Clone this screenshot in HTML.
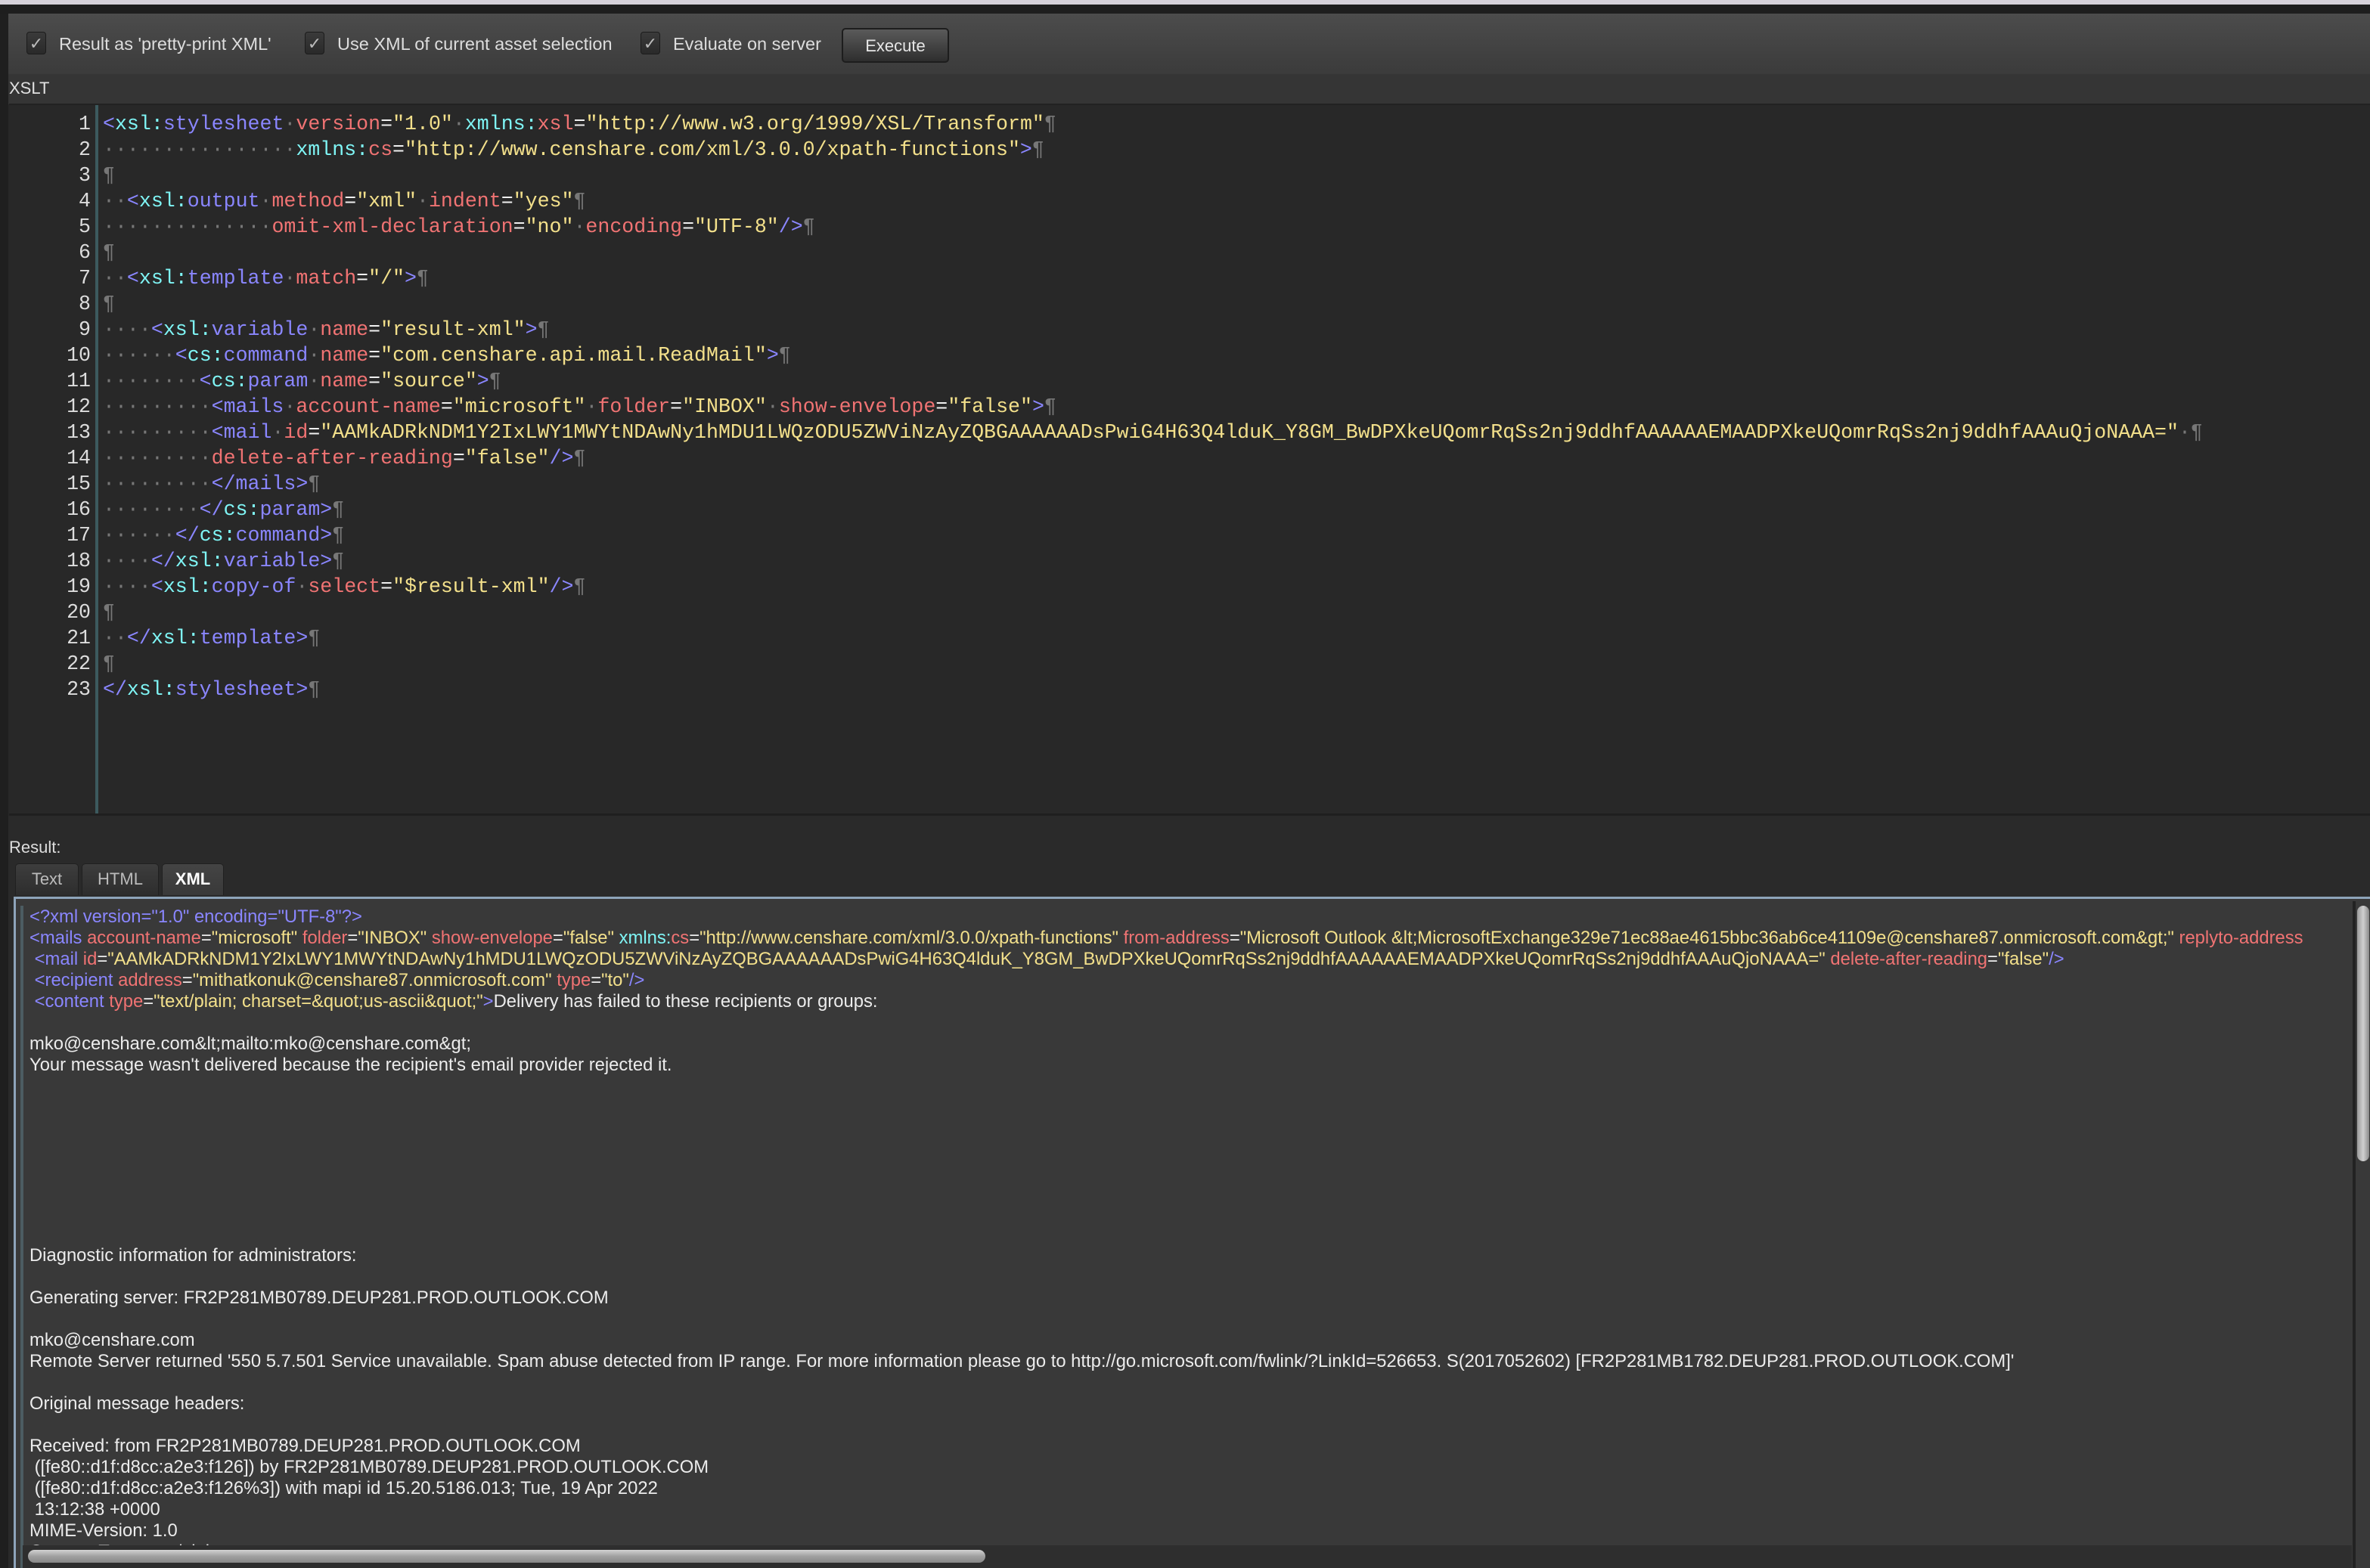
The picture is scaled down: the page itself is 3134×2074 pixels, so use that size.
<!DOCTYPE html>
<html><head><meta charset="utf-8"><style>
*{margin:0;padding:0;box-sizing:border-box}
body{width:3134px;height:2074px;overflow:hidden;background:#282828;font-family:"Liberation Sans",sans-serif;position:relative}
.abs{position:absolute}
#top{left:0;top:0;width:3134px;height:6px;background:#d6d2da}
#dark{left:0;top:6px;width:3134px;height:12px;background:#1e1e1e}
#lstrip{left:0;top:18px;width:11px;height:2056px;background:#1f1f1f}
#tool{left:11px;top:18px;width:3123px;height:80px;background:linear-gradient(#4c4c4c,#3b3b3b)}
#under{left:11px;top:98px;width:3123px;height:40px;background:#353535}
.cb{position:absolute;top:24px;width:26px;height:30px;border-radius:4px;background:linear-gradient(#3a3a3a,#2a2a2a);border:1px solid #1c1c1c;color:#bbb;font-size:22px;text-align:center;line-height:30px}
.lbl{position:absolute;top:26px;color:#ddd;font-size:23.5px;line-height:28px}
#exec{left:1113px;top:37px;width:142px;height:46px;border-radius:5px;border:2px solid #1d1d1d;background:linear-gradient(#5a5a5a,#2e2e2e);color:#e6e6e6;font-size:22px;text-align:center;line-height:44px}
#xslt{left:12px;top:104px;color:#e0e0e0;font-size:22px}
#editor{left:12px;top:137px;width:3122px;height:942px;background:#282828;border-top:2px solid #222;border-bottom:3px solid #1f1f1f;overflow:hidden}
#gut{left:114px;top:0;width:4px;height:940px;background:#3c5a5e}
#nums{left:0;top:8px;width:108px;text-align:right;color:#ddd}
#code{left:124px;top:8px;color:#f0f0f0}
.mono{font-family:"Liberation Mono",monospace;font-size:26.6px;line-height:34px;white-space:pre}
.d{color:#777}.p{color:#8a86ff}.c{color:#7ff5f5}.a{color:#f07373}.v{color:#f3e08b}.w{color:#eee}
#below{left:11px;top:1079px;width:3123px;height:995px;background:#2a2a2a}
#res{left:12px;top:1108px;color:#ddd;font-size:22px}
.tab{position:absolute;top:1142px;height:42px;border:1px solid #202020;border-bottom:none;border-radius:5px 5px 0 0;background:linear-gradient(#3d3d3d,#2d2d2d);color:#bbb;font-size:22px;text-align:center;line-height:40px}
#panel{left:18px;top:1186px;width:3116px;height:888px;background:#393939;border-top:3px solid #8ea4ba;border-left:3px solid #8ea4ba}
#pin{left:27px;top:1198px;width:4px;height:876px;background:#4c5c62}
#out{left:39px;top:1199px;width:3072px;height:845px;overflow:hidden;color:#ececec;font-size:23.8px;line-height:28px;white-space:pre}
#vs{left:3117px;top:1198px;width:16px;height:338px;border-radius:8px;background:linear-gradient(90deg,#9a9a9a,#d0d0d0,#8a8a8a)}
#vtrack{left:3111px;top:1192px;width:4px;height:882px;background:#222}
#hs{left:37px;top:2050px;width:1266px;height:17px;border-radius:9px;background:linear-gradient(#d2d2d2,#a0a0a0,#888)}
#htrack{left:30px;top:2044px;width:3080px;height:30px;background:#2e2e2e}
</style></head><body>
<div class="abs" id="top"></div><div class="abs" id="dark"></div><div class="abs" id="lstrip"></div>
<div class="abs" id="tool">
<div class="cb" style="left:24px">✓</div><div class="lbl" style="left:67px">Result as 'pretty-print XML'</div>
<div class="cb" style="left:392px">✓</div><div class="lbl" style="left:435px">Use XML of current asset selection</div>
<div class="cb" style="left:836px">✓</div><div class="lbl" style="left:879px">Evaluate on server</div>
</div>
<div class="abs" id="exec">Execute</div>
<div class="abs" id="under"></div>
<div class="abs" id="xslt">XSLT</div>
<div class="abs" id="editor">
<div class="abs" id="gut"></div>
<div class="abs mono" id="nums">1
2
3
4
5
6
7
8
9
10
11
12
13
14
15
16
17
18
19
20
21
22
23</div>
<div class="abs mono" id="code"><span class="p">&lt;</span><span class="c">xsl:</span><span class="p">stylesheet</span><span class="d">·</span><span class="a">version</span>=<span class="v">"1.0"</span><span class="d">·</span><span class="c">xmlns:</span><span class="a">xsl</span>=<span class="v">"http://www.w3.org/1999/XSL/Transform"</span><span class="d">¶</span>
<span class="d">················</span><span class="c">xmlns:</span><span class="a">cs</span>=<span class="v">"http://www.censhare.com/xml/3.0.0/xpath-functions"</span><span class="p">&gt;</span><span class="d">¶</span>
<span class="d">¶</span>
<span class="d">··</span><span class="p">&lt;</span><span class="c">xsl:</span><span class="p">output</span><span class="d">·</span><span class="a">method</span>=<span class="v">"xml"</span><span class="d">·</span><span class="a">indent</span>=<span class="v">"yes"</span><span class="d">¶</span>
<span class="d">··············</span><span class="a">omit-xml-declaration</span>=<span class="v">"no"</span><span class="d">·</span><span class="a">encoding</span>=<span class="v">"UTF-8"</span><span class="p">/&gt;</span><span class="d">¶</span>
<span class="d">¶</span>
<span class="d">··</span><span class="p">&lt;</span><span class="c">xsl:</span><span class="p">template</span><span class="d">·</span><span class="a">match</span>=<span class="v">"/"</span><span class="p">&gt;</span><span class="d">¶</span>
<span class="d">¶</span>
<span class="d">····</span><span class="p">&lt;</span><span class="c">xsl:</span><span class="p">variable</span><span class="d">·</span><span class="a">name</span>=<span class="v">"result-xml"</span><span class="p">&gt;</span><span class="d">¶</span>
<span class="d">······</span><span class="p">&lt;</span><span class="c">cs:</span><span class="p">command</span><span class="d">·</span><span class="a">name</span>=<span class="v">"com.censhare.api.mail.ReadMail"</span><span class="p">&gt;</span><span class="d">¶</span>
<span class="d">········</span><span class="p">&lt;</span><span class="c">cs:</span><span class="p">param</span><span class="d">·</span><span class="a">name</span>=<span class="v">"source"</span><span class="p">&gt;</span><span class="d">¶</span>
<span class="d">·········</span><span class="p">&lt;mails</span><span class="d">·</span><span class="a">account-name</span>=<span class="v">"microsoft"</span><span class="d">·</span><span class="a">folder</span>=<span class="v">"INBOX"</span><span class="d">·</span><span class="a">show-envelope</span>=<span class="v">"false"</span><span class="p">&gt;</span><span class="d">¶</span>
<span class="d">·········</span><span class="p">&lt;mail</span><span class="d">·</span><span class="a">id</span>=<span class="v">"AAMkADRkNDM1Y2IxLWY1MWYtNDAwNy1hMDU1LWQzODU5ZWViNzAyZQBGAAAAAADsPwiG4H63Q4lduK_Y8GM_BwDPXkeUQomrRqSs2nj9ddhfAAAAAAEMAADPXkeUQomrRqSs2nj9ddhfAAAuQjoNAAA="</span><span class="d">·¶</span>
<span class="d">·········</span><span class="a">delete-after-reading</span>=<span class="v">"false"</span><span class="p">/&gt;</span><span class="d">¶</span>
<span class="d">·········</span><span class="p">&lt;/mails&gt;</span><span class="d">¶</span>
<span class="d">········</span><span class="p">&lt;/</span><span class="c">cs:</span><span class="p">param&gt;</span><span class="d">¶</span>
<span class="d">······</span><span class="p">&lt;/</span><span class="c">cs:</span><span class="p">command&gt;</span><span class="d">¶</span>
<span class="d">····</span><span class="p">&lt;/</span><span class="c">xsl:</span><span class="p">variable&gt;</span><span class="d">¶</span>
<span class="d">····</span><span class="p">&lt;</span><span class="c">xsl:</span><span class="p">copy-of</span><span class="d">·</span><span class="a">select</span>=<span class="v">"$result-xml"</span><span class="p">/&gt;</span><span class="d">¶</span>
<span class="d">¶</span>
<span class="d">··</span><span class="p">&lt;/</span><span class="c">xsl:</span><span class="p">template&gt;</span><span class="d">¶</span>
<span class="d">¶</span>
<span class="p">&lt;/</span><span class="c">xsl:</span><span class="p">stylesheet&gt;</span><span class="d">¶</span></div>
</div>
<div class="abs" id="below"></div>
<div class="abs" id="res">Result:</div>
<div class="tab" style="left:20px;width:84px">Text</div>
<div class="tab" style="left:108px;width:102px">HTML</div>
<div class="tab" style="left:214px;width:82px;color:#fff;font-weight:bold;background:linear-gradient(#444,#393939)">XML</div>
<div class="abs" id="panel"></div>
<div class="abs" id="pin"></div>
<div class="abs" id="out"><span class="p">&lt;?xml version="1.0" encoding="UTF-8"?&gt;</span>
<span class="p">&lt;mails</span> <span class="a">account-name</span>=<span class="v">"microsoft"</span> <span class="a">folder</span>=<span class="v">"INBOX"</span> <span class="a">show-envelope</span>=<span class="v">"false"</span> <span class="c">xmlns:</span><span class="a">cs</span>=<span class="v">"http://www.censhare.com/xml/3.0.0/xpath-functions"</span> <span class="a">from-address</span>=<span class="v">"Microsoft Outlook &amp;lt;MicrosoftExchange329e71ec88ae4615bbc36ab6ce41109e@censhare87.onmicrosoft.com&amp;gt;"</span> <span class="a">replyto-address</span>
 <span class="p">&lt;mail</span> <span class="a">id</span>=<span class="v">"AAMkADRkNDM1Y2IxLWY1MWYtNDAwNy1hMDU1LWQzODU5ZWViNzAyZQBGAAAAAADsPwiG4H63Q4lduK_Y8GM_BwDPXkeUQomrRqSs2nj9ddhfAAAAAAEMAADPXkeUQomrRqSs2nj9ddhfAAAuQjoNAAA="</span> <span class="a">delete-after-reading</span>=<span class="v">"false"</span><span class="p">/&gt;</span>
 <span class="p">&lt;recipient</span> <span class="a">address</span>=<span class="v">"mithatkonuk@censhare87.onmicrosoft.com"</span> <span class="a">type</span>=<span class="v">"to"</span><span class="p">/&gt;</span>
 <span class="p">&lt;content</span> <span class="a">type</span>=<span class="v">"text/plain; charset=&amp;quot;us-ascii&amp;quot;"</span><span class="p">&gt;</span>Delivery has failed to these recipients or groups:

mko@censhare.com&amp;lt;mailto:mko@censhare.com&amp;gt;
Your message wasn't delivered because the recipient's email provider rejected it.








Diagnostic information for administrators:

Generating server: FR2P281MB0789.DEUP281.PROD.OUTLOOK.COM

mko@censhare.com
Remote Server returned '550 5.7.501 Service unavailable. Spam abuse detected from IP range. For more information please go to http://go.microsoft.com/fwlink/?LinkId=526653. S(2017052602) [FR2P281MB1782.DEUP281.PROD.OUTLOOK.COM]'

Original message headers:

Received: from FR2P281MB0789.DEUP281.PROD.OUTLOOK.COM
 ([fe80::d1f:d8cc:a2e3:f126]) by FR2P281MB0789.DEUP281.PROD.OUTLOOK.COM
 ([fe80::d1f:d8cc:a2e3:f126%3]) with mapi id 15.20.5186.013; Tue, 19 Apr 2022
 13:12:38 +0000
MIME-Version: 1.0
Content-Type: text/plain</div>
<div class="abs" id="vtrack"></div>
<div class="abs" id="vs"></div>
<div class="abs" id="htrack"></div>
<div class="abs" id="hs"></div>
</body></html>
